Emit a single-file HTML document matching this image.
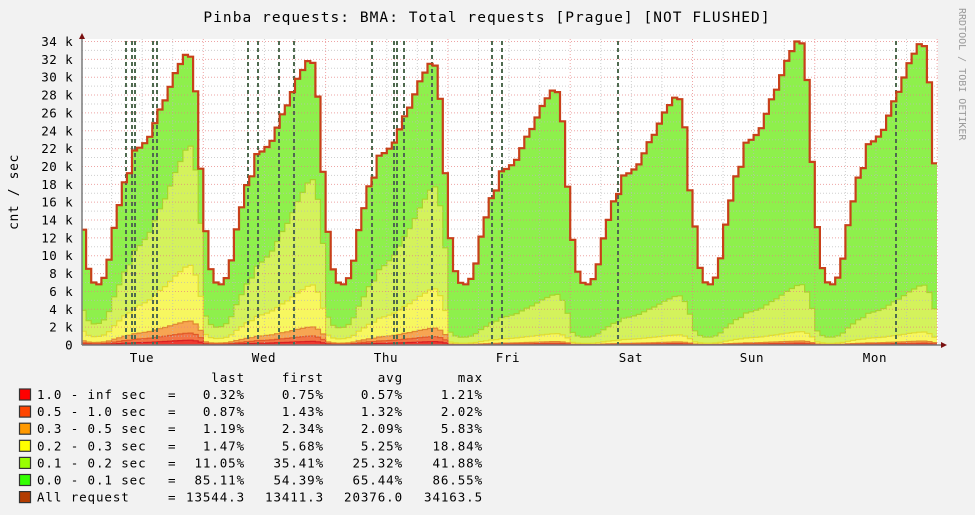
<!DOCTYPE html>
<html><head><meta charset="utf-8">
<style>
html,body{margin:0;padding:0;background:#f0f0f0;}
svg{display:block;}
text{font-family:"DejaVu Sans Mono","Liberation Mono",monospace;fill:#000;}
</style></head>
<body>
<svg id="g" width="975" height="515" viewBox="0 0 975 515" xmlns="http://www.w3.org/2000/svg">
<rect x="0" y="0" width="975" height="515" fill="#f2f2f2"/>
<rect x="82" y="39" width="856" height="306" fill="#ffffff"/>
<g id="areas"></g>
<g id="grid"></g>
<g id="dash"></g>
<g id="tot"></g>
<text x="487" y="22" font-size="14.5" letter-spacing="1.05" text-anchor="middle">Pinba requests: BMA: Total requests [Prague] [NOT FLUSHED]</text>
<text transform="translate(18,192) rotate(-90)" font-size="13" letter-spacing="0.6" text-anchor="middle">cnt / sec</text>
<text transform="translate(959,8) rotate(90)" font-size="10" letter-spacing="0" style="fill:#9a9a9a">RRDTOOL / TOBI OETIKER</text>
<g id="ylab" font-size="12.5" letter-spacing="0.4" text-anchor="end"></g>
<g font-size="12.5" letter-spacing="0.6" text-anchor="middle">
<text x="142" y="362">Tue</text><text x="264" y="362">Wed</text><text x="386" y="362">Thu</text>
<text x="508" y="362">Fri</text><text x="631" y="362">Sat</text><text x="752" y="362">Sun</text><text x="875" y="362">Mon</text>
</g>
<line x1="82" y1="345" x2="942" y2="345" stroke="#7a7a7a" stroke-width="1.5"/>
<line x1="82" y1="345" x2="82" y2="38" stroke="#7a7a7a" stroke-width="1.5"/>
<polygon points="79,39 85,39 82,33" fill="#7a1010"/>
<polygon points="941,342 941,348 947,345" fill="#7a1010"/>
<g id="leg" font-size="12.5"></g>
</svg>
<script>
(function(){
var NS="http://www.w3.org/2000/svg";
function el(p,t,a,txt){var e=document.createElementNS(NS,t);for(var k in a)e.setAttribute(k,a[k]);if(txt!=null)e.textContent=txt;document.getElementById(p).appendChild(e);return e;}
var Y=function(v){return 345-v*(303.5/34);};
var P=[13.3,9,7.5,7.3,8,10,13.5,16,18.5,19.5,22,22.3,22.8,23.5,25,26.5,27.5,29,30.5,31.5,32.5,32.3,28.5,20,14];
var peaks=[32.5,31.8,31.5,28.5,27.7,34,33.7];
var slow=[1,0.85,0.82,0.3,0.22,0.28,0.27];
var DW=122.3, N=24, sw=DW/N;
var xs=[],tot=[],lay=[[],[],[],[],[]];
for(var d=0;d<7;d++){
 for(var i=0;i<N;i++){
  var h=i;
  var p=P[h];
  var t=6.8+(p-7.3)/(32.5-7.3)*(peaks[d]-6.8);
  if(t<6)t=6;
  var s=slow[d];
  var flg=s*(0.3+0.39*Math.min(h,21)/21);
  if(s<0.5)flg=0.12+0.08*Math.min(h,21)/21;
  var lg=t*flg;
  var ye=lg*(0.15+0.25*s);
  var or=ye*0.3;
  var orr=or*0.5;
  var rd=orr*0.4;
  xs.push(81+d*DW+i*sw);
  tot.push(t);lay[0].push(lg);lay[1].push(ye);lay[2].push(or);lay[3].push(orr);lay[4].push(rd);
 }
}
var xend=937;
function stepPath(vals,close){
 var d="";
 for(var i=0;i<vals.length;i++){
  var x0=Math.max(xs[i],82),x1=(i+1<xs.length?xs[i+1]:xend),y=Y(vals[i]).toFixed(1);
  d+=(i==0?"M":"L")+x0.toFixed(1)+","+y+"L"+x1.toFixed(1)+","+y;
 }
 if(close)d+="L"+xend+",345L82,345Z";
 return d;
}
var fills=["#8ef04c","#d4f25c","#f7f760","#f7a552","#f27445","#ee3a30"];
var lines=["#5cc82a","#a8d42c","#e0dc30","#e08830","#e05828","#d82020"];
var all=[tot].concat(lay);
for(var k=0;k<all.length;k++){
 el("areas","path",{d:stepPath(all[k],true),fill:fills[k]});
 if(k>0)el("areas","path",{d:stepPath(all[k],false),fill:"none",stroke:lines[k],"stroke-width":1.2});
}
el("tot","path",{d:stepPath(tot,false),fill:"none",stroke:"#c8401a","stroke-width":2.2});
for(var v=1;v<=34;v++){
 var y=Y(v);
 el("grid","line",{x1:82,x2:938,y1:y,y2:y,stroke:(v%2==0?"#e88080":"#bbbbbb"),"stroke-width":1,"stroke-dasharray":"1,2",opacity:0.7});
}
for(var q=1;q<=28;q++){
 var x=81+q*DW/4;
 el("grid","line",{x1:x,x2:x,y1:39,y2:345,stroke:(q%4==0?"#e88080":"#bbbbbb"),"stroke-width":1,"stroke-dasharray":"1,2",opacity:0.7});
}
var dx=[126,132,135,153,157,248,258,279,294,372,394,397,404,432,492,502,618,896];
dx.forEach(function(x){el("dash","line",{x1:x,x2:x,y1:41,y2:345,stroke:"#4f6a4f","stroke-width":2,"stroke-dasharray":"4,3"});});
for(var v=0;v<=34;v+=2){el("ylab","text",{x:73,y:Y(v)+4.5},v==0?"0":v+" k");}
var rows=[["#ff0000","1.0 - inf sec","0.32%","0.75%","0.57%","1.21%"],
["#ff4500","0.5 - 1.0 sec","0.87%","1.43%","1.32%","2.02%"],
["#ff9900","0.3 - 0.5 sec","1.19%","2.34%","2.09%","5.83%"],
["#ffff00","0.2 - 0.3 sec","1.47%","5.68%","5.25%","18.84%"],
["#99ff00","0.1 - 0.2 sec","11.05%","35.41%","25.32%","41.88%"],
["#33ff00","0.0 - 0.1 sec","85.11%","54.39%","65.44%","86.55%"],
["#b33c00","All request","13544.3","13411.3","20376.0","34163.5"]];
var cols=[245,324,403,483];
["last","first","avg","max"].forEach(function(h,i){el("leg","text",{x:cols[i],y:382,"text-anchor":"end","letter-spacing":"0.9"},h);});
rows.forEach(function(r,j){
 var y=399+j*17.1;
 el("leg","rect",{x:19.5,y:y-10,width:11,height:11,fill:r[0],stroke:"#333","stroke-width":1.2});
 el("leg","text",{x:37,y:y,"letter-spacing":"0.9"},r[1]);
 el("leg","text",{x:168,y:y},"=");
 for(var c=0;c<4;c++)el("leg","text",{x:cols[c],y:y,"text-anchor":"end","letter-spacing":"0.9"},r[2+c]);
});
})();
</script>
</body></html>
